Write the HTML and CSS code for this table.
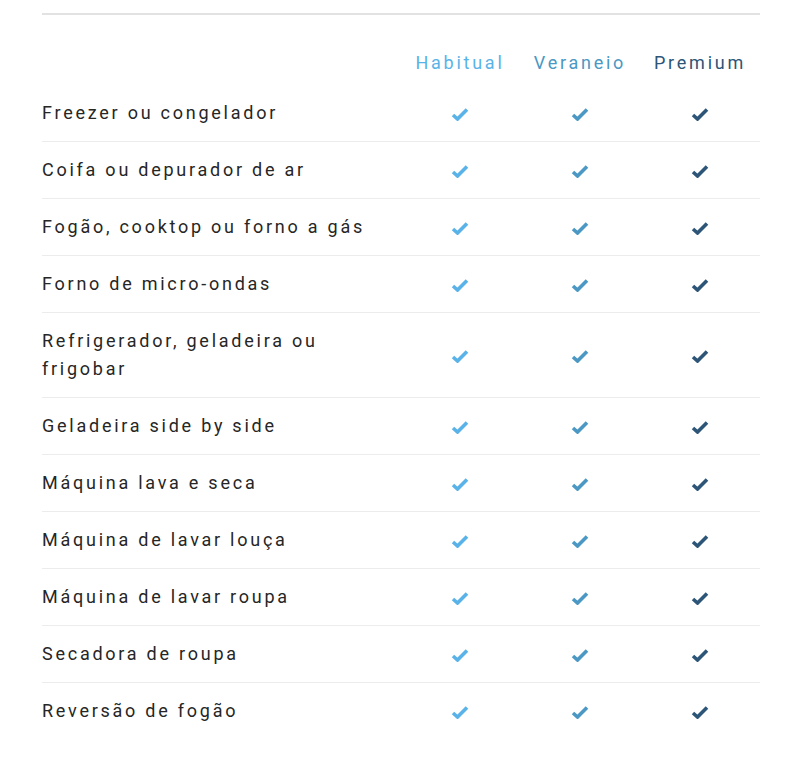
FILE: index.html
```html
<!DOCTYPE html>
<html lang="pt-BR">
<head>
<meta charset="utf-8">
<title>Comparativo de planos</title>
<link rel="stylesheet" href="styles.css">
</head>
<body>
<svg width="0" height="0" class="defs">
  <symbol id="chk" viewBox="0 0 18 14">
    <path d="M2 8 L6.5 12 L16 2.5" fill="none" stroke="currentColor" stroke-width="3.6" stroke-linecap="butt" stroke-linejoin="miter"/>
  </symbol>
</svg>
<div class="wrap">
  <table class="plans">
    <thead>
      <tr>
        <th class="label"></th>
        <th class="c1">Habitual</th>
        <th class="c2">Veraneio</th>
        <th class="c3">Premium</th>
      </tr>
    </thead>
    <tbody id="rows"></tbody>
  </table>
</div>
<script>
var items = ["Freezer ou congelador","Coifa ou depurador de ar","Fogão, cooktop ou forno a gás","Forno de micro-ondas","Refrigerador, geladeira ou frigobar","Geladeira side by side","Máquina lava e seca","Máquina de lavar louça","Máquina de lavar roupa","Secadora de roupa","Reversão de fogão"];
var tb = document.getElementById('rows');
var chk = '<svg class="check" width="18" height="14"><use href="#chk"/></svg>';
items.forEach(function(t){
  var tr = document.createElement('tr');
  tr.innerHTML = '<td class="label">'+t+'</td><td class="c1">'+chk+'</td><td class="c2">'+chk+'</td><td class="c3">'+chk+'</td>';
  tb.appendChild(tr);
});
</script>
</body>
</html>
```
FILE: styles.css
```css
html, body {
  margin: 0;
  padding: 0;
  background: #fff;
}
body {
  font-family: Roboto, "Noto Sans", sans-serif;
  color: #262626;
}
.defs {
  position: absolute;
}
.wrap {
  padding: 13px 40px 0 42px;
}
.plans {
  width: 718px;
  border-collapse: collapse;
  border-top: 2px solid #e2e2e2;
  table-layout: fixed;
}
.plans th,
.plans td {
  padding: 0;
  font-weight: 400;
  letter-spacing: 2.75px;
}
.plans th {
  font-size: 18px;
  height: 71px;
  padding-top: 24px;
  box-sizing: border-box;
  text-align: center;
  vertical-align: middle;
}
.plans th.label {
  width: 358px;
}
.plans td {
  border-top: 1px solid #ececec;
  text-align: center;
  vertical-align: middle;
  line-height: 28px;
  padding: 14px 0;
}
.plans tbody tr:first-child td {
  border-top: none;
}
.plans td.label {
  text-align: left;
  font-size: 18px;
  padding-right: 0;
}
.c1 { color: #5ab3e8; }
.c2 { color: #4a98c3; }
.c3 { color: #2c5578; }
.check {
  display: inline-block;
  vertical-align: middle;
}
```
